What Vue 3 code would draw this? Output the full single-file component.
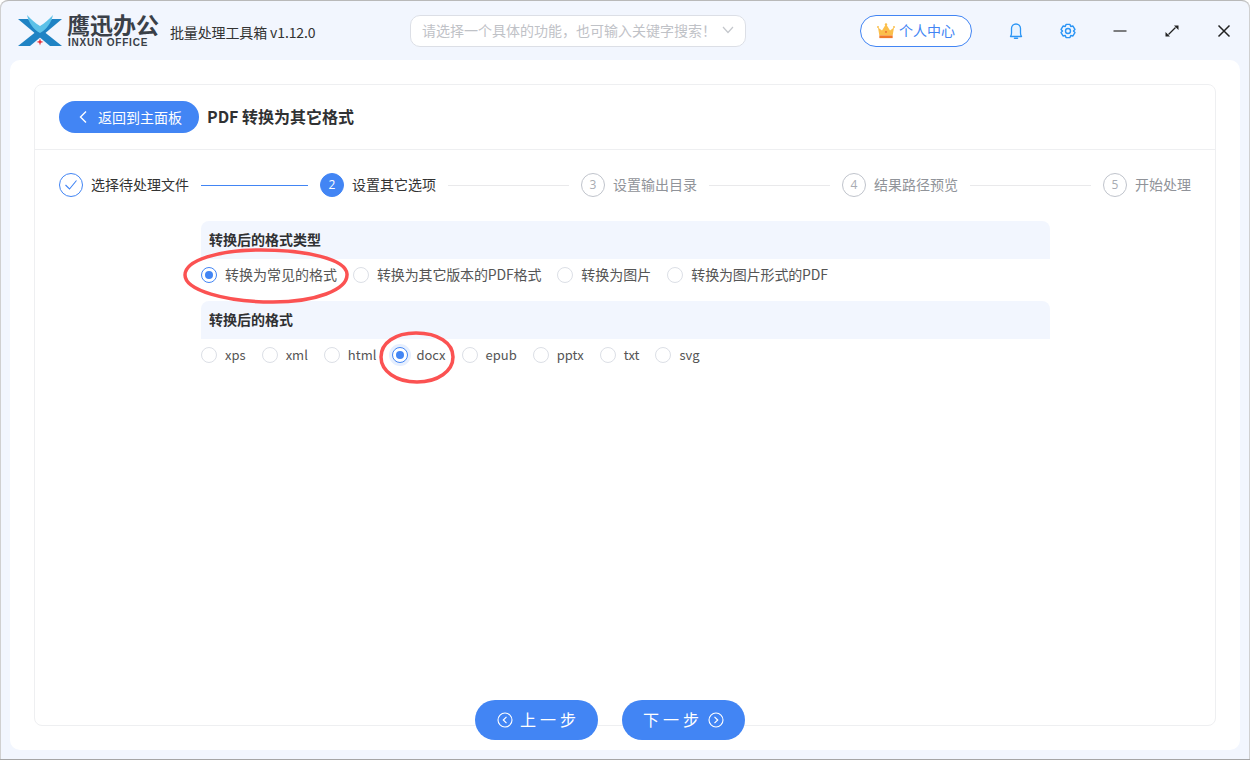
<script setup>
const steps = [
  { n: 1, label: '选择待处理文件', state: 'done' },
  { n: 2, label: '设置其它选项', state: 'active' },
  { n: 3, label: '设置输出目录', state: 'todo' },
  { n: 4, label: '结果路径预览', state: 'todo' },
  { n: 5, label: '开始处理', state: 'todo' },
]
const types = [
  { label: '转换为常见的格式', on: true },
  { label: '转换为其它版本的PDF格式', tight: true },
  { label: '转换为图片' },
  { label: '转换为图片形式的PDF', tight: true },
]
const formats = [
  { label: 'xps' }, { label: 'xml' }, { label: 'html' }, { label: 'docx', on: true, focus: true },
  { label: 'epub' }, { label: 'pptx' }, { label: 'txt' }, { label: 'svg' },
]
</script>

<template>
  <div class="window">
    <header class="titlebar">
      <div class="brand">
        <svg class="logo" width="44" height="32" viewBox="0 0 44 32">
          <path d="M0 4h10l34 27H32z" fill="#1f83c4" />
          <path d="M44 4H34L0 31h12z" fill="#1f83c4" />
          <path d="M9 0c5 5 8 8 13 11 5-3 8-6 13-11-2 8-6 14-13 18C15 14 11 8 9 0z" fill="#5cc1e8" />
          <path d="M22 23.500l.9 2.500 2.600.9-2.600.9-.9 2.700-.9-2.700-2.600-.9 2.600-.9z" fill="#e5343d" />
        </svg>
        <div class="wordmark">
          <div class="cn">鹰迅办公</div>
          <div class="en">INXUN OFFICE</div>
        </div>
        <div class="version">批量处理工具箱 v1.12.0</div>
      </div>
      <div class="search">
        <span>请选择一个具体的功能，也可输入关键字搜索！</span>
        <svg width="12" height="8" viewBox="0 0 12 8"><path d="M1 1l5 5.500L11 1" fill="none" stroke="#c4c7cc" stroke-width="1.200" /></svg>
      </div>
      <div class="user">
        <svg class="crown" width="18" height="16" viewBox="0 0 20 18">
          <path d="M1 5l4.500 3.500L10 1l4.500 7.500L19 5l-1.500 9h-15z" fill="#fbbf4b" />
          <circle cx="10" cy="1.800" r="1.400" fill="#fbbf4b" /><circle cx="1" cy="4.500" r="1.100" fill="#fbbf4b" /><circle cx="19" cy="4.500" r="1.100" fill="#fbbf4b" />
          <rect x="2.500" y="14" width="15" height="3" fill="#f0782a" />
          <circle cx="10" cy="10" r="1" fill="#e8632a" />
        </svg>
        <span>个人中心</span>
      </div>
      <div class="tools">
        <svg class="tool" width="18" height="18" viewBox="0 0 18 18">
          <path d="M3.500 14.500c.8-1 1-2 1-3.500V6.500a4.500 4.500 0 0 1 9 0V11c0 1.500.2 2.500 1 3.500z" fill="#e8f3ff" stroke="#2b95f5" stroke-width="1.300" stroke-linejoin="round" />
          <path d="M7.500 16.300h3" stroke="#2b95f5" stroke-width="1.500" stroke-linecap="round" />
        </svg>
        <svg class="tool" width="18" height="18" viewBox="0 0 18 18">
          <path d="M7.200 2h3.600l.7 1.900 2-.4 1.800 3.100-1.300 1.400 1.300 1.400-1.800 3.100-2-.4-.7 1.900H7.200l-.7-1.900-2 .4-1.800-3.100L4 8 2.700 6.600l1.800-3.100 2 .4z" transform="translate(-0.900 0.200) scale(1.100)" fill="none" stroke="#2b95f5" stroke-width="1.300" stroke-linejoin="round" />
          <circle cx="9" cy="9" r="2.500" fill="none" stroke="#2b95f5" stroke-width="1.400" />
        </svg>
        <svg class="tool" width="18" height="18" viewBox="0 0 18 18"><path d="M2.500 9h13" stroke="#555" stroke-width="1.500" /></svg>
        <svg class="tool" width="18" height="18" viewBox="0 0 18 18">
          <path d="M5.500 12.500l7-7" stroke="#222" stroke-width="1.300" />
          <path d="M11 3.500h4.500V8zM2.500 10v4.500H7z" fill="#222" />
        </svg>
        <svg class="tool" width="18" height="18" viewBox="0 0 18 18"><path d="M3.500 3.500l11 11M14.500 3.500l-11 11" stroke="#222" stroke-width="1.500" /></svg>
      </div>
    </header>

    <main class="sheet">
      <section class="panel">
        <div class="panel-head">
          <button class="back">
            <svg width="10" height="14" viewBox="0 0 10 14"><path d="M8 1.500L2.500 7 8 12.500" fill="none" stroke="#fff" stroke-width="1.400" /></svg>
            <span>返回到主面板</span>
          </button>
          <h1>PDF 转换为其它格式</h1>
        </div>

        <div class="steps">
          <div v-for="s in steps" :key="s.n" class="step" :class="s.state">
            <span class="dot">
              <svg v-if="s.state === 'done'" width="14" height="12" viewBox="0 0 14 12"><path d="M1.500 6l4 4 7-8.500" fill="none" stroke="#4285f4" stroke-width="1.100" /></svg>
              <template v-else>{{ s.n }}</template>
            </span>
            <span class="step-label">{{ s.label }}</span>
            <span v-if="s.n < 5" class="line"></span>
          </div>
        </div>

        <div class="form">
          <div class="group-title">转换后的格式类型</div>
          <div class="radios">
            <label v-for="t in types" :key="t.label" class="radio" :class="{ on: t.on, tight: t.tight }">
              <i class="mark"></i><span>{{ t.label }}</span>
            </label>
          </div>
          <div class="group-title">转换后的格式</div>
          <div class="radios formats">
            <label v-for="f in formats" :key="f.label" class="radio" :class="{ on: f.on, focus: f.focus }">
              <i class="mark"></i><span>{{ f.label }}</span>
            </label>
          </div>
        </div>
      </section>

      <div class="footer">
        <button class="nav prev">
          <svg width="16" height="16" viewBox="0 0 16 16"><circle cx="8" cy="8" r="7" fill="none" stroke="#fff" stroke-width="1.100" /><path d="M9.500 4.800L6.300 8l3.200 3.200" fill="none" stroke="#fff" stroke-width="1.200" /></svg>
          <span>上一步</span>
        </button>
        <button class="nav next">
          <span>下一步</span>
          <svg width="16" height="16" viewBox="0 0 16 16"><circle cx="8" cy="8" r="7" fill="none" stroke="#fff" stroke-width="1.100" /><path d="M6.500 4.800L9.700 8l-3.200 3.200" fill="none" stroke="#fff" stroke-width="1.200" /></svg>
        </button>
      </div>
    </main>

    <svg class="ink ink-a" width="170" height="58" viewBox="0 0 170 58">
      <path d="M80 3C38 3 4 13 4 28c0 15 40 27 88 27 42 0 75-12 74-28C165 12 125 3 80 3z" fill="none" stroke="#fb5252" stroke-width="3.500" />
    </svg>
    <svg class="ink ink-b" width="80" height="56" viewBox="0 0 80 56">
      <path d="M38 3C17 3 3 13 3 27c0 14 15 25 36 25 21 0 36-11 36-25C75 13 60 3 38 3z" fill="none" stroke="#fb5252" stroke-width="3.500" />
    </svg>
  </div>
</template>

<style>
html, body { margin: 0; }
</style>

<style scoped>
* { box-sizing: border-box; }
.window {
  position: relative;
  width: 1250px;
  height: 760px;
  background: #f2f6fe;
  border-top: 1px solid #b9b9b9;
  border-bottom: 1px solid #a6a6a6;
  border-radius: 8px 8px 0 0;
  box-shadow: inset 1px 0 0 #d0d0d0, inset -1px 0 0 #d0d0d0;
  overflow: hidden;
  font-family: "Noto Sans CJK SC", "Open Sans", sans-serif;
  color: #333;
  display: flex;
  flex-direction: column;
}
.titlebar {
  height: 59px;
  flex: none;
  display: flex;
  align-items: center;
}
.brand { display: flex; align-items: center; width: 410px; padding-left: 18px; }
.logo { flex: none; margin-top: 1px; }
.wordmark { margin-left: 5px; width: 103px; }
.cn { font-size: 23px; line-height: 23px; font-weight: 700; color: #3a4048; white-space: nowrap; }
.en { font: 700 10px/10px "Liberation Sans", sans-serif; letter-spacing: 0.800px; color: #3a4048; white-space: nowrap; margin-top: 2px; margin-left: 1px; }
.version { font-size: 14px; line-height: 20px; letter-spacing: -0.130px; color: #333; margin-top: 3px; white-space: nowrap; }
.search {
  width: 336px;
  height: 32px;
  background: #fff;
  border: 1px solid #dcdfe6;
  border-radius: 10px;
  padding: 0 11px 2px;
  display: flex;
  align-items: center;
  justify-content: space-between;
  font-size: 14px;
  line-height: 20px;
  color: #bfc2c7;
  white-space: nowrap;
}
.user {
  margin-left: 114px;
  width: 112px;
  height: 32px;
  border: 1px solid #4285f4;
  border-radius: 16px;
  background: #fff;
  display: flex;
  align-items: center;
  justify-content: center;
  gap: 4px;
  padding-bottom: 2px;
  font-size: 14px;
  color: #4285f4;
}
.crown { margin-top: 2px; }
.tools { flex: 1; display: flex; align-items: center; margin-left: 35px; gap: 34px; }
.tool { flex: none; }
.sheet {
  width: 1230px;
  margin-left: 10px;
  height: 690px;
  background: #fff;
  border-radius: 10px;
  padding: 24px;
  position: relative;
}
.panel {
  height: 642px;
  border: 1px solid #eeeff1;
  border-radius: 8px;
}
.panel-head {
  height: 65px;
  border-bottom: 1px solid #eeeff1;
  padding: 16px 0 0 24px;
  display: flex;
  align-items: flex-start;
  gap: 8px;
}
.back {
  width: 140px;
  height: 32px;
  border: 0;
  border-radius: 16px;
  background: #4285f4;
  color: #fff;
  font: 14px "Noto Sans CJK SC", sans-serif;
  display: flex;
  align-items: center;
  gap: 10px;
  padding: 0 0 0 19px;
}
h1 { margin: 0; font-size: 16px; line-height: 30px; font-weight: 700; color: #303133; }
.steps {
  display: flex;
  align-items: center;
  padding: 0 24px 1px;
  height: 71px;
}
.step { flex: 1 1 0; display: flex; align-items: center; min-width: 0; }
.step:last-child { flex: none; }
.dot {
  width: 24px;
  height: 24px;
  flex: none;
  border-radius: 50%;
  border: 1px solid #c0c4cc;
  color: #a8abb2;
  font: 12px/22px "Open Sans", sans-serif;
  display: flex;
  align-items: center;
  justify-content: center;
}
.done .dot { border-color: #4285f4; }
.active .dot { background: #4285f4; border-color: #4285f4; color: #fff; }
.step-label { margin-left: 8px; padding-bottom: 2px; font-size: 14px; line-height: 20px; color: #909399; white-space: nowrap; }
.done .step-label, .active .step-label { color: #333; }
.line { flex: 1; height: 1px; margin: 0 12px; background: #e9e9eb; }
.done .line { background: #4285f4; }
.form { width: 849px; margin-left: 166px; }
.group-title {
  height: 38px;
  background: #f2f6fe;
  border-radius: 8px 8px 0 0;
  padding-left: 8px;
  font-size: 14px;
  line-height: 36px;
  font-weight: 700;
  color: #303133;
}
.radios { height: 42px; display: flex; align-items: center; padding-bottom: 10px; gap: 16px; }
.radio { display: flex; align-items: center; gap: 8px; font-size: 14px; color: #555; white-space: nowrap; }
.radio span { padding-bottom: 2px; }
.radio.tight span { letter-spacing: -0.150px; }
.formats .radio { font-size: 13px; }
.mark {
  width: 16px;
  height: 16px;
  border-radius: 50%;
  border: 1px solid #dcdfe6;
  background: #fff;
  flex: none;
  position: relative;
}
.on .mark { border-color: #4285f4; }
.on .mark::after {
  content: "";
  position: absolute;
  inset: 3px;
  border-radius: 50%;
  background: #4285f4;
}
.focus .mark { box-shadow: 0 0 0 3px #e6effe; }
.footer {
  position: absolute;
  left: 465px;
  top: 640px;
  display: flex;
  gap: 24px;
}
.nav {
  width: 123px;
  height: 40px;
  border: 0;
  border-radius: 20px;
  background: #4285f4;
  color: #fff;
  font: 16px "Noto Sans CJK SC", sans-serif;
  letter-spacing: 4px;
  display: flex;
  align-items: center;
}
.nav span { padding-bottom: 2px; }
.prev { padding-left: 22px; gap: 7px; }
.next { padding-left: 21px; gap: 5px; }
.ink { position: absolute; }
.ink-a { left: 181px; top: 246px; }
.ink-b { left: 378px; top: 329px; }
</style>
